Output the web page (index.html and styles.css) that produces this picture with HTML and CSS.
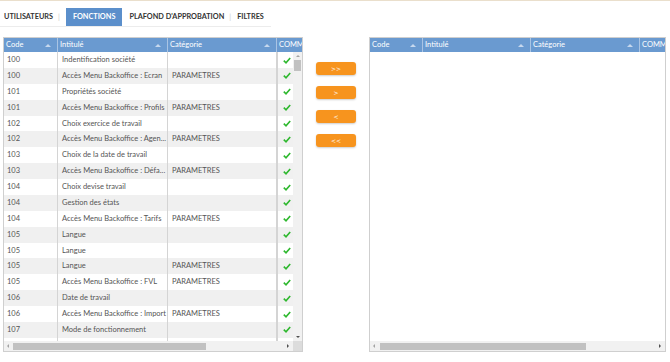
FILE: index.html
```html
<!DOCTYPE html>
<html lang="fr">
<head>
    <meta charset="UTF-8">
    <title>Fonctions</title>
    <link rel="stylesheet" href="styles.css">
</head>
<body>
    <div class="topline"></div>
    <nav class="tabs">
        <a href="#">Utilisateurs</a>
        <span class="sep">|</span>
        <a href="#" class="active">Fonctions</a>
        <a href="#">Plafond d'approbation</a>
        <span class="sep">|</span>
        <a href="#">Filtres</a>
    </nav>

    <div class="main">
        <div class="grid left">
            <div class="grid-head">
                <div class="th">Code<span class="sort"></span></div>
                <div class="th">Intitulé<span class="sort"></span></div>
                <div class="th">Catégorie<span class="sort"></span></div>
                <div class="th">COMMENTAIRE</div>
            </div>
            <div class="grid-body">
                <div class="rows" id="rows"></div>
                <div class="vscroll">
                    <span class="arr up"></span>
                    <span class="vthumb"></span>
                    <span class="arr down"></span>
                </div>
            </div>
            <div class="hscroll">
                <span class="harr"></span>
                <span class="hthumb"></span>
                <span class="harr right"></span>
                <span class="corner"></span>
            </div>
        </div>

        <div class="actions">
            <button>&gt;&gt;</button>
            <button>&gt;</button>
            <button>&lt;</button>
            <button>&lt;&lt;</button>
        </div>

        <div class="grid right">
            <div class="grid-head">
                <div class="th">Code<span class="sort"></span></div>
                <div class="th">Intitulé<span class="sort"></span></div>
                <div class="th">Catégorie<span class="sort"></span></div>
                <div class="th">COMMENTAIRE</div>
            </div>
            <div class="grid-body empty"></div>
            <div class="hscroll">
                <span class="harr"></span>
                <span class="hthumb wide"></span>
                <span class="harr right"></span>
            </div>
        </div>
    </div>

    <script>
        var data = [
            ["100", "Indentification société", ""],
            ["100", "Accès Menu Backoffice : Ecran", "PARAMETRES"],
            ["101", "Propriétés société", ""],
            ["101", "Accès Menu Backoffice : Profils", "PARAMETRES"],
            ["102", "Choix exercice de travail", ""],
            ["102", "Accès Menu Backoffice : Agen...", "PARAMETRES"],
            ["103", "Choix de la date de travail", ""],
            ["103", "Accès Menu Backoffice : Défa...", "PARAMETRES"],
            ["104", "Choix devise travail", ""],
            ["104", "Gestion des états", ""],
            ["104", "Accès Menu Backoffice : Tarifs", "PARAMETRES"],
            ["105", "Langue", ""],
            ["105", "Langue", ""],
            ["105", "Langue", "PARAMETRES"],
            ["105", "Accès Menu Backoffice : FVL", "PARAMETRES"],
            ["106", "Date de travail", ""],
            ["106", "Accès Menu Backoffice : Import", "PARAMETRES"],
            ["107", "Mode de fonctionnement", ""],
            ["107", "Accès Menu Backoffice : Utilis...", "PARAMETRES"]
        ];
        var check = '<svg width="8" height="7" viewBox="0 0 8 7"><path d="M0.8 3.6 L3 5.8 L7.2 0.9" fill="none" stroke="#2eb82e" stroke-width="1.6"/></svg>';
        var html = "";
        data.forEach(function (r) {
            html += '<div class="tr"><div class="td">' + r[0] + '</div><div class="td">' + r[1] +
                '</div><div class="td">' + r[2] + '</div><div class="td chk">' + check + '</div></div>';
        });
        document.getElementById("rows").innerHTML = html;
    </script>
</body>
</html>
```

FILE: styles.css
```css
body {
    margin: 0;
    padding: 0;
    background-color: #fff;
    font-family: Lato, "Open Sans", sans-serif;
    color: #555;
}
.topline {
    height: 1px;
    background-color: #eadfcc;
}
.tabs {
    display: inline-flex;
    align-items: center;
    height: 19px;
    margin-top: 7px;
    padding: 0 2px 0 4px;
    border-bottom: 1px solid #ececec;
    box-sizing: border-box;
    font-size: 7.3px;
    font-weight: bold;
    text-transform: uppercase;
    white-space: nowrap;
}
.tabs a {
    color: #333;
    text-decoration: none;
    padding: 0 5px 0 0;
    line-height: 18px;
}
.tabs a.active {
    background-color: #5b8fcb;
    color: #fff;
    padding: 0 7px;
    margin-right: 7px;
}
.tabs .sep {
    color: #ccc;
    font-weight: normal;
    margin-right: 6px;
}
.main {
    display: flex;
    align-items: flex-start;
    margin-top: 10px;
    padding-left: 3px;
}
.grid {
    border: 1px solid #cfcfcf;
    height: 315px;
    box-sizing: border-box;
    overflow: hidden;
    display: flex;
    flex-direction: column;
}
.grid.left {
    width: 300px;
}
.grid.right {
    width: 297px;
    margin-left: 13px;
}
.grid-head, .tr {
    display: grid;
    grid-template-columns: 54px 110px 109px 60px;
}
.right .grid-head {
    grid-template-columns: 53px 108px 109px 60px;
}
.grid-head {
    background-color: #6a9ad0;
    height: 14px;
    flex-shrink: 0;
}
.th {
    position: relative;
    color: #fff;
    font-size: 7.5px;
    line-height: 14px;
    padding-left: 2px;
    border-right: 1px solid #a9c4e4;
    white-space: nowrap;
    overflow: hidden;
}
.sort {
    position: absolute;
    right: 6px;
    top: 6px;
    border-left: 3px solid transparent;
    border-right: 3px solid transparent;
    border-bottom: 3px solid #c6d8ee;
}
.grid-body {
    flex: 1;
    display: flex;
    overflow: hidden;
}
.rows {
    width: 289px;
    overflow: hidden;
}
.tr {
    height: 15.88px;
}
.tr:nth-child(even) {
    background-color: #f0f0f0;
}
.td {
    font-size: 7.5px;
    line-height: 15.88px;
    padding-left: 3px;
    border-right: 1px solid #d4d4d4;
    white-space: nowrap;
    overflow: hidden;
}
.td:nth-child(2), .td:nth-child(3) {
    padding-left: 4px;
}
.td.chk {
    border-left: 1px solid #d4d4d4;
    padding-left: 5px;
}
.td.chk svg {
    vertical-align: middle;
}
.vscroll {
    width: 9px;
    background-color: #f1f1f1;
    display: flex;
    flex-direction: column;
    align-items: center;
}
.arr {
    width: 0;
    height: 0;
    border-left: 2px solid transparent;
    border-right: 2px solid transparent;
    margin: 3px 0;
}
.arr.up {
    border-bottom: 2px solid #a3a3a3;
}
.arr.down {
    border-top: 2px solid #505050;
    margin-top: auto;
}
.vthumb {
    width: 7px;
    height: 11px;
    background-color: #c1c1c1;
}
.hscroll {
    height: 10px;
    flex-shrink: 0;
    display: flex;
    align-items: center;
    background-color: #f1f1f1;
}
.harr {
    width: 0;
    height: 0;
    border-top: 2px solid transparent;
    border-bottom: 2px solid transparent;
    border-right: 2px solid #a3a3a3;
    margin: 0 4px 0 3px;
}
.harr.right {
    margin-left: auto;
    border-right: none;
    border-left: 2px solid #505050;
}
.hthumb {
    width: 193px;
    height: 7px;
    background-color: #c1c1c1;
}
.hthumb.wide {
    width: 206px;
    margin-left: 1px;
}
.corner {
    width: 9px;
    height: 10px;
    background-color: #dcdcdc;
}
.grid-body.empty {
    background-color: #fff;
}
.actions {
    display: flex;
    flex-direction: column;
    gap: 11px;
    margin: 25px 0 0 13px;
}
.actions button {
    width: 40px;
    height: 13px;
    padding: 0;
    border: none;
    border-radius: 3px;
    background-color: #f7941e;
    color: #fff;
    font-family: "DejaVu Sans", sans-serif;
    font-size: 6px;
    line-height: 13px;
    box-shadow: 0 1px 2px rgba(0, 0, 0, 0.2);
    cursor: pointer;
}
```
